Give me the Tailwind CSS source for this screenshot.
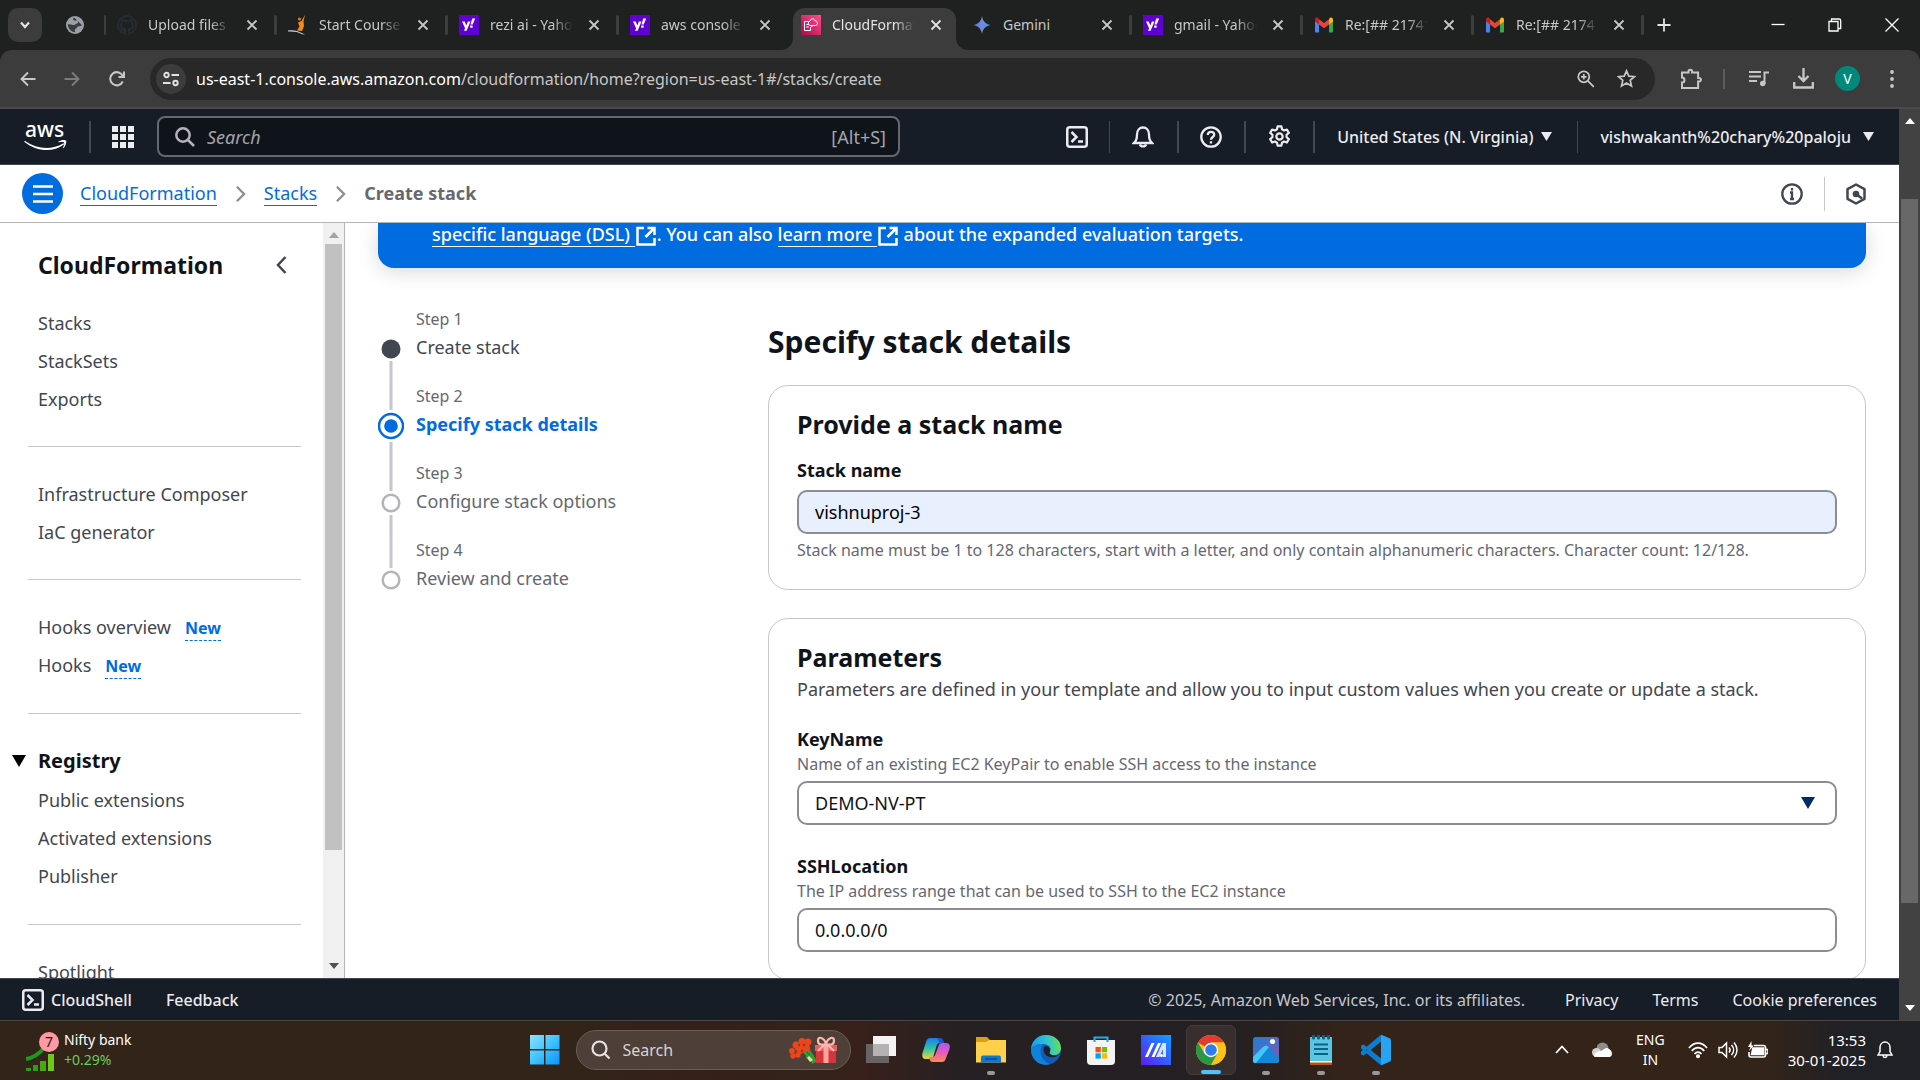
<!DOCTYPE html>
<html lang="en">
<head>
<meta charset="utf-8">
<title>CloudFormation - Create stack</title>
<script src="https://cdn.jsdelivr.net/npm/@tailwindcss/browser@4"></script>
</head>
<body class="h-screen flex flex-col overflow-hidden bg-white font-['Noto_Sans','Open_Sans',sans-serif] text-[#0f141a]">

<!-- Shared symbols -->
<svg class="hidden" aria-hidden="true">
  <symbol id="x" viewBox="0 0 20 20"><path d="M5.500 5.500l9 9M14.500 5.500l-9 9" stroke="currentColor" stroke-width="1.800" fill="none"/></symbol>
  <symbol id="yahoo" viewBox="0 0 20 20"><path fill="#5f01d1" d="M0 0h20v20H0z"/><path fill="#fff" d="M3 6.500h2.700l1.600 3.900 1.600-3.900h2.600L7.600 15.800H5l1.100-2.500zM13.200 3.500h3l-2.500 6h-2.200zM11.200 10.500h2.400v2.200h-2.400z"/></symbol>
  <symbol id="gmail" viewBox="0 0 20 16"><path fill="#4285f4" d="M1 3v11.500c0 .6.500 1 1 1h3V7z"/><path fill="#34a853" d="M15 15.500h3c.6 0 1-.4 1-1V3l-4 4z"/><path fill="#fbbc04" d="M15 2.200V7.500l4-3V2.500c0-1.800-2-2.500-3.200-1.500z"/><path fill="#ea4335" d="M5 7.500V2.200l5 3.800 5-3.800v5.300l-5 3.800z"/><path fill="#c5221f" d="M1 2.500v2l4 3V2.200L4.200 1C3 0 1 .8 1 2.500z"/></symbol>
  <symbol id="shell" viewBox="0 0 22 22"><rect x="1.250" y="1.250" width="19.500" height="19.500" rx="2.500" fill="none" stroke="currentColor" stroke-width="2.500"/><path d="M5.500 6l5 5-5 5M12 15.500h5" fill="none" stroke="currentColor" stroke-width="2.500"/></symbol>
  <symbol id="ext" viewBox="0 0 20 20"><path d="M8 2H1.500v16.500h17V12M11.500 2h7v7M18 2.500L9.500 11" fill="none" stroke="currentColor" stroke-width="2.500"/></symbol>
  <symbol id="caret" viewBox="0 0 12 12"><path d="M0 1h12L6 11z" fill="currentColor"/></symbol>
  <symbol id="crumb" viewBox="0 0 12 20"><path d="M2 2l8 8-8 8" fill="none" stroke="currentColor" stroke-width="2.500"/></symbol>
</svg>

<!-- Tab strip -->
<header class="flex h-[50px] shrink-0 items-stretch bg-[#1f2120] text-sm text-[#c7c7c7]">
  <button aria-label="Search tabs" class="ml-2 mt-2 flex size-[34px] items-center justify-center rounded-[10px] bg-[#3c3c3c]"><svg class="size-4" viewBox="0 0 16 16"><path d="M4 5.500l4 4.500 4-4.500" fill="none" stroke="#e3e3e3" stroke-width="2.200"/></svg></button>
  <button aria-label="Pinned tab" class="flex w-[62px] items-center justify-center pl-1"><svg class="size-[18px]" viewBox="0 0 18 18"><circle cx="9" cy="9" r="9" fill="#9aa0a6"/><path d="M8.500 1.800C5 3 8 5 10.500 4.500c2 0 2 2.500.5 3-2 .5-2 2-4 1.500C5 8.500 3 8 1.800 8.500c.2 4 3.200 7.500 7.200 7.700.5-1-1-2.500.5-3.500 2-.5 1.500-2.700 3.500-2.500 1 0 2-.5 3-1" fill="#3a3d3f"/></svg></button>
  <div class="h-5 w-[2px] self-center rounded bg-[#3c3e3d]"></div>
  <nav class="flex min-w-0" aria-label="Tabs">
    <div class="flex w-[171px] items-center">
      <div class="ml-[3px] mr-[2px] flex min-w-0 flex-1 items-center pl-2 pr-2.5"><svg class="size-5 shrink-0" viewBox="0 0 20 20"><path d="M8 18.500v-3c-3 .5-3-1.500-4-2M8 18.500C3.500 17.500 1 14 1 10a9 9 0 0118 0c0 4-2.500 7.500-7 8.500v-4c2.500-.5 4-2 4-4.500 0-1.500-.8-2.500-1.200-3 0-1 0-1.500-.3-2-1 0-2 1-2.500 1.200-1.500-.3-3-.3-4 0C7.500 6 6.500 5 5.500 5c-.3.500-.3 1-.3 2C4.500 8 4 9 4 10c0 2.500 1.500 4 4 4.500z" fill="none" stroke="#262c34" stroke-width="2"/></svg><a href="#" class="ml-[11px] min-w-0 flex-1 overflow-hidden whitespace-nowrap [mask-image:linear-gradient(to_right,black_75%,transparent)]">Upload files</a><button aria-label="Close tab" class="ml-[11px]"><svg class="size-5"><use href="#x"/></svg></button></div>
      <div class="h-5 w-[3px] rounded bg-[#3c3e3d]"></div>
    </div>
    <div class="flex w-[171px] items-center">
      <div class="ml-[3px] mr-[2px] flex min-w-0 flex-1 items-center pl-2 pr-2.5"><svg class="size-5 shrink-0" viewBox="0 0 20 20"><path d="M17 0l-1.500 6.500L16 11l-2 5-5-.5 2.500-4L10 7.500l3.500-1.500z" fill="#f08c1e"/><circle cx="11.500" cy="4" r="1.600" fill="#e8710a"/><path d="M0 15.500c5-1 10 0 17 4l-3-.2c-4-2.500-8-3-14-2.800z" fill="#c8cbe6"/></svg><a href="#" class="ml-[11px] min-w-0 flex-1 overflow-hidden whitespace-nowrap [mask-image:linear-gradient(to_right,black_75%,transparent)]">Start Course</a><button aria-label="Close tab" class="ml-[11px]"><svg class="size-5"><use href="#x"/></svg></button></div>
      <div class="h-5 w-[3px] rounded bg-[#3c3e3d]"></div>
    </div>
    <div class="flex w-[171px] items-center">
      <div class="ml-[3px] mr-[2px] flex min-w-0 flex-1 items-center pl-2 pr-2.5"><svg class="size-5 shrink-0"><use href="#yahoo"/></svg><a href="#" class="ml-[11px] min-w-0 flex-1 overflow-hidden whitespace-nowrap [mask-image:linear-gradient(to_right,black_75%,transparent)]">rezi ai - Yahoo</a><button aria-label="Close tab" class="ml-[11px]"><svg class="size-5"><use href="#x"/></svg></button></div>
      <div class="h-5 w-[3px] rounded bg-[#3c3e3d]"></div>
    </div>
    <div class="flex w-[171px] items-center">
      <div class="ml-[3px] mr-[2px] flex min-w-0 flex-1 items-center pl-2 pr-2.5"><svg class="size-5 shrink-0"><use href="#yahoo"/></svg><a href="#" class="ml-[11px] min-w-0 flex-1 overflow-hidden whitespace-nowrap [mask-image:linear-gradient(to_right,black_75%,transparent)]">aws console</a><button aria-label="Close tab" class="ml-[11px]"><svg class="size-5"><use href="#x"/></svg></button></div>
      <div class="w-[3px]"></div>
    </div>
    <div class="flex w-[171px] items-end">
      <div class="relative ml-[3px] mr-[2px] flex h-[42px] min-w-0 flex-1 items-center rounded-t-xl bg-[#3c3c3c] pb-2 pl-2 pr-2.5 text-[#e3e3e3]">
        <svg class="absolute -left-3 bottom-0 size-3" viewBox="0 0 12 12"><path d="M12 0v12H0A12 12 0 0012 0z" fill="#3c3c3c"/></svg>
        <svg class="absolute -right-3 bottom-0 size-3" viewBox="0 0 12 12"><path d="M0 0v12h12A12 12 0 010 0z" fill="#3c3c3c"/></svg>
        <svg class="size-5 shrink-0" viewBox="0 0 20 20"><defs><linearGradient id="cf" x1="0" y1="1" x2="1" y2="0"><stop stop-color="#b0084d"/><stop offset="1" stop-color="#ff4f8b"/></linearGradient></defs><path fill="url(#cf)" d="M0 0h20v20H0z"/><path d="M9.500 12.500v3h-6v-9h4M5.300 9.500h2.500M5.300 12h2.500M9.300 10.500a2.300 2.300 0 01-.3-4.500c.7-3 4.500-2.700 5-.3 3 0 3.300 4.800.3 4.800zM9.500 12.500l2.500-2" fill="none" stroke="#fff" stroke-width="1"/></svg>
        <a href="#" aria-current="page" class="ml-[11px] min-w-0 flex-1 overflow-hidden whitespace-nowrap [mask-image:linear-gradient(to_right,black_75%,transparent)]">CloudFormation</a><button aria-label="Close tab" class="ml-[11px]"><svg class="size-5"><use href="#x"/></svg></button></div>
      <div class="w-[3px]"></div>
    </div>
    <div class="flex w-[171px] items-center">
      <div class="ml-[3px] mr-[2px] flex min-w-0 flex-1 items-center pl-2 pr-2.5"><svg class="size-5 shrink-0" viewBox="0 0 20 20"><defs><linearGradient id="gm" x1="0" y1="0" x2="1" y2="0"><stop stop-color="#4a7ff0"/><stop offset=".5" stop-color="#7a86d8"/><stop offset="1" stop-color="#2b9cf0"/></linearGradient></defs><path fill="url(#gm)" d="M10 1c.8 5 3.500 8 8.500 9-5 1-7.700 4-8.500 9-.8-5-3.500-8-8.500-9 5-1 7.700-4 8.500-9z"/></svg><a href="#" class="ml-[11px] min-w-0 flex-1 overflow-hidden whitespace-nowrap">Gemini</a><button aria-label="Close tab" class="ml-[11px]"><svg class="size-5"><use href="#x"/></svg></button></div>
      <div class="h-5 w-[3px] rounded bg-[#3c3e3d]"></div>
    </div>
    <div class="flex w-[171px] items-center">
      <div class="ml-[3px] mr-[2px] flex min-w-0 flex-1 items-center pl-2 pr-2.5"><svg class="size-5 shrink-0"><use href="#yahoo"/></svg><a href="#" class="ml-[11px] min-w-0 flex-1 overflow-hidden whitespace-nowrap [mask-image:linear-gradient(to_right,black_75%,transparent)]">gmail - Yahoo</a><button aria-label="Close tab" class="ml-[11px]"><svg class="size-5"><use href="#x"/></svg></button></div>
      <div class="h-5 w-[3px] rounded bg-[#3c3e3d]"></div>
    </div>
    <div class="flex w-[171px] items-center">
      <div class="ml-[3px] mr-[2px] flex min-w-0 flex-1 items-center pl-2 pr-2.5"><svg class="h-4 w-5 shrink-0"><use href="#gmail"/></svg><a href="#" class="ml-[11px] min-w-0 flex-1 overflow-hidden whitespace-nowrap [mask-image:linear-gradient(to_right,black_75%,transparent)]">Re:[## 21741</a><button aria-label="Close tab" class="ml-[11px]"><svg class="size-5"><use href="#x"/></svg></button></div>
      <div class="h-5 w-[3px] rounded bg-[#3c3e3d]"></div>
    </div>
    <div class="flex w-[170px] items-center">
      <div class="ml-[3px] mr-[2px] flex min-w-0 flex-1 items-center pl-2 pr-2.5"><svg class="h-4 w-5 shrink-0"><use href="#gmail"/></svg><a href="#" class="ml-[11px] min-w-0 flex-1 overflow-hidden whitespace-nowrap [mask-image:linear-gradient(to_right,black_75%,transparent)]">Re:[## 21741</a><button aria-label="Close tab" class="ml-[11px]"><svg class="size-5"><use href="#x"/></svg></button></div>
      <div class="h-5 w-[3px] rounded bg-[#3c3e3d]"></div>
    </div>
  </nav>
  <button aria-label="New tab" class="flex w-10 items-center justify-center"><svg class="size-4" viewBox="0 0 16 16"><path d="M8 1.500v13M1.500 8h13" stroke="#e3e3e3" stroke-width="1.800"/></svg></button>
  <div class="ml-auto flex text-white">
    <button aria-label="Minimize" class="flex w-[57px] items-center justify-center"><svg class="size-4" viewBox="0 0 16 16"><path d="M1.500 7.500h13" stroke="currentColor" stroke-width="1.300"/></svg></button>
    <button aria-label="Restore" class="flex w-[57px] items-center justify-center"><svg class="size-4" viewBox="0 0 16 16"><path d="M2 4.500h9v9.500H2zM4.500 4V2h7.500c1 0 1.700.7 1.700 1.700V11.500H11.500" fill="none" stroke="currentColor" stroke-width="1.300"/></svg></button>
    <button aria-label="Close" class="flex w-[57px] items-center justify-center"><svg class="size-4" viewBox="0 0 16 16"><path d="M1.500 1.500l13 13M14.500 1.500l-13 13" stroke="currentColor" stroke-width="1.300"/></svg></button>
  </div>
</header>

<!-- Address bar -->
<div class="shrink-0 bg-[#1f2120]">
<div class="flex h-[59px] items-center rounded-t-xl border-b-2 border-[#4a4a4a] bg-[#3c3c3c] text-[#c7c7c7]">
  <button aria-label="Back" class="ml-4 flex size-6 items-center justify-center"><svg class="size-4" viewBox="0 0 16 16"><path d="M15.500 8H1.500M8 1.500L1.500 8 8 14.500" fill="none" stroke="currentColor" stroke-width="1.900"/></svg></button>
  <button aria-label="Forward" class="ml-5 flex size-6 items-center justify-center text-[#7c7c7c]"><svg class="size-4" viewBox="0 0 16 16"><path d="M.5 8h14M8 1.500L14.500 8 8 14.500" fill="none" stroke="currentColor" stroke-width="1.900"/></svg></button>
  <button aria-label="Reload" class="ml-[21px] flex size-6 items-center justify-center"><svg class="size-4" viewBox="0 0 16 16"><path d="M13.800 10.500A6.600 6.600 0 1114 5.500M15 .5v5.500H9.500" fill="none" stroke="currentColor" stroke-width="2"/></svg></button>
  <div class="ml-[21px] flex h-[42px] min-w-0 flex-1 items-center rounded-full bg-[#282828]">
    <button aria-label="Site information" class="ml-1.5 flex size-[30px] shrink-0 items-center justify-center rounded-full bg-[#3c3c3c]"><svg class="size-4" viewBox="0 0 16 16" fill="none" stroke="#e3e3e3" stroke-width="1.900"><circle cx="3.500" cy="4" r="2.200"/><path d="M8.500 4H16M0 12h7.500"/><circle cx="12.500" cy="12" r="2.200"/></svg></button>
    <div class="ml-2.5 min-w-0 flex-1 truncate text-base"><span class="text-white">us-east-1.console.aws.amazon.com</span>/cloudformation/home?region=us-east-1#/stacks/create</div>
    <button aria-label="Zoom" class="flex size-5 items-center justify-center"><svg class="size-[18px]" viewBox="0 0 18 18" fill="none" stroke="currentColor" stroke-width="1.800"><circle cx="6.800" cy="6.800" r="5.500"/><path d="M10.800 10.800l6 6M6.800 4v5.600M4 6.800h5.600"/></svg></button>
    <button aria-label="Bookmark" class="ml-5 mr-[19px] flex size-5 items-center justify-center"><svg class="size-[19px]" viewBox="0 0 19 19"><path d="M9.500 1.800l2.300 5.300 5.700.5-4.300 3.800 1.300 5.600-5-3-5 3 1.300-5.600L1.500 7.600l5.700-.5z" fill="none" stroke="currentColor" stroke-width="1.700"/></svg></button>
  </div>
  <button aria-label="Extensions" class="ml-6 flex size-6 items-center justify-center"><svg class="size-[22px]" viewBox="0 0 22 22"><path d="M2 4.500h6.500v-1a1.800 1.800 0 013.600 0v1h6v5.500h1a1.800 1.800 0 010 3.600h-1V20H2v-5.500a2.500 2.500 0 000-5z" fill="none" stroke="currentColor" stroke-width="2"/></svg></button>
  <div class="ml-5 h-5 w-0.5 bg-[#5c5c5c]"></div>
  <button aria-label="Media controls" class="ml-[22px] flex size-6 items-center justify-center"><svg class="size-5" viewBox="0 0 20 20"><path d="M0 3h12M0 7.500h12M0 12h8M15.500 15V3.500H20" fill="none" stroke="currentColor" stroke-width="2"/><circle cx="13.700" cy="14.500" r="2.700" fill="currentColor"/></svg></button>
  <button aria-label="Downloads" class="ml-5 flex size-6 items-center justify-center"><svg class="size-[21px]" viewBox="0 0 21 21"><path d="M10.500 0v12M5.500 8l5 5 5-5M1.200 14v5.500h18.600V14" fill="none" stroke="currentColor" stroke-width="2.300"/></svg></button>
  <button aria-label="Profile" class="ml-5 flex size-[25px] items-center justify-center rounded-full bg-[#00897b] text-sm text-white">V</button>
  <button aria-label="Menu" class="ml-[30px] mr-[26px]"><svg class="h-5 w-1" viewBox="0 0 4 20" fill="currentColor"><circle cx="2" cy="3" r="1.900"/><circle cx="2" cy="10" r="1.900"/><circle cx="2" cy="17" r="1.900"/></svg></button>
</div>
</div>

<!-- Web page and its scrollbar -->
<div class="flex min-h-0 flex-1">
  <div class="flex min-w-0 flex-1 flex-col">

    <header class="flex h-14 shrink-0 items-center border-b border-[#424650] bg-[#161d26] text-base text-[#ebebf0]">
      <a href="#" aria-label="AWS home" class="ml-6"><svg class="h-8 w-[44px]" viewBox="0 0 44 32"><text x="1" y="16" font-family="Noto Sans" font-weight="500" font-size="21" fill="#fff">aws</text><path d="M1 20c12 8.500 27 9 38 2.500.8-.4 1.500.4.8 1C29 32 12 30.500.5 21c-.5-.5 0-1.300.5-1z" fill="#fff"/><path d="M34.500 20.500c2-1.500 6.500-2 7.500-1 .8 1-.2 5.500-2.500 7.500-.5.400-.8.200-.6-.3.800-1.600 1.700-4.200 1.200-5-.6-.8-3.500-.6-5.200-.4-.6 0-.8-.3-.4-.8z" fill="#fff"/></svg></a>
      <div class="ml-[21px] h-8 w-0.5 bg-[#424650]"></div>
      <button aria-label="Services" class="ml-[21px]"><svg class="size-[22px]" viewBox="0 0 22 22" fill="currentColor"><path d="M0 0h6v6H0zM8 0h6v6H8zM16 0h6v6h-6zM0 8h6v6H0zM8 8h6v6H8zM16 8h6v6h-6zM0 16h6v6H0zM8 16h6v6H8zM16 16h6v6h-6z"/></svg></button>
      <label class="ml-[23px] flex h-[41px] w-[743px] items-center rounded-lg border-2 border-[#656871] bg-[#0f141a] px-4">
        <svg class="size-5 shrink-0" viewBox="0 0 20 20" fill="none" stroke="#b4b4bb" stroke-width="2.500"><circle cx="8" cy="8" r="6.700"/><path d="M13 13l6 6"/></svg>
        <input type="search" placeholder="Search" class="ml-3 min-w-0 flex-1 bg-transparent text-lg outline-none placeholder:italic placeholder:text-[#a4a4ad]">
        <span class="-mr-1 text-lg text-[#a4a4ad]">[Alt+S]</span>
      </label>
      <div class="ml-auto flex items-center">
        <button aria-label="CloudShell"><svg class="size-[22px]"><use href="#shell"/></svg></button>
        <div class="ml-[21px] h-8 w-px bg-[#424650]"></div>
        <button aria-label="Notifications" class="ml-[22px]"><svg class="size-[22px]" viewBox="0 0 22 22" fill="none" stroke="currentColor" stroke-width="2.300"><path d="M2 17c2.500-2 3-4 3-8.500C5 4.500 7.500 1.500 11 1.500s6 3 6 7c0 4.500.5 6.500 3 8.500zM8 18.500c.5 2.500 5.500 2.500 6 0"/></svg></button>
        <div class="ml-[23px] h-8 w-0.5 bg-[#424650]"></div>
        <button aria-label="Help" class="ml-[21px]"><svg class="size-[22px]" viewBox="0 0 22 22" fill="none" stroke="currentColor" stroke-width="2.300"><circle cx="11" cy="11" r="9.700"/><path d="M7.800 9c0-4.200 6.400-4.200 6.400-.3 0 2.300-3.200 2.300-3.200 5M11 15.200v2.300"/></svg></button>
        <div class="ml-[22px] h-8 w-0.5 bg-[#424650]"></div>
        <button aria-label="Settings" class="ml-[22px]"><svg class="size-[23px]" viewBox="0 0 24 24" fill="none" stroke="currentColor" stroke-width="2.300"><circle cx="12" cy="12" r="3.300"/><path d="M10 1.500h4l.6 3 2.200 1.200 2.900-1 2 3.500-2.300 2v2.600l2.300 2-2 3.500-2.900-1-2.200 1.200-.6 3h-4l-.6-3-2.200-1.200-2.900 1-2-3.500 2.300-2v-2.600l-2.300-2 2-3.500 2.900 1 2.200-1.200z" stroke-linejoin="round"/></svg></button>
        <div class="ml-[22px] h-8 w-0.5 bg-[#424650]"></div>
        <button class="ml-[22px] flex items-center gap-2 font-medium">United States (N. Virginia)<svg class="size-[11px]"><use href="#caret"/></svg></button>
        <div class="ml-[25px] h-8 w-px bg-[#424650]"></div>
        <button class="ml-[22px] mr-[25px] flex items-center gap-3 font-medium">vishwakanth%20chary%20paloju<svg class="size-[11px]"><use href="#caret"/></svg></button>
      </div>
    </header>

    <div class="flex h-[58px] shrink-0 items-center border-b border-[#b4b4bb] bg-white text-lg">
      <button aria-label="Toggle navigation" class="ml-[22px] flex size-[41px] items-center justify-center rounded-full bg-[#006ce0]"><svg class="h-[18px] w-5" viewBox="0 0 20 18"><path d="M0 1.500h20M0 9h20M0 16.500h20" stroke="#fff" stroke-width="2.500"/></svg></button>
      <nav aria-label="Breadcrumbs" class="ml-[17px] flex items-center">
        <a href="#" class="border-b border-[#006ce0] leading-6 text-[#006ce0]">CloudFormation</a>
        <svg class="mx-[18px] h-[18px] w-[11px] text-[#8c8c94]"><use href="#crumb"/></svg>
        <a href="#" class="border-b border-[#006ce0] leading-6 text-[#006ce0]">Stacks</a>
        <svg class="mx-[18px] h-[18px] w-[11px] text-[#8c8c94]"><use href="#crumb"/></svg>
        <span class="border-b border-transparent font-bold leading-6 text-[#656871]">Create stack</span>
      </nav>
      <button aria-label="Info" class="ml-auto text-[#424650]"><svg class="size-[22px]" viewBox="0 0 22 22"><circle cx="11" cy="11" r="9.700" fill="none" stroke="currentColor" stroke-width="2.300"/><path d="M11 5v2.500M9 9.500h2V16M9 16h4" fill="none" stroke="currentColor" stroke-width="2.300"/></svg></button>
      <div class="ml-[21px] h-[34px] w-px bg-[#c6c6cd]"></div>
      <button aria-label="Preferences" class="ml-5 mr-8 text-[#424650]"><svg class="size-[22px]" viewBox="0 0 22 22"><path d="M11 1.500l8.500 4.700v9.600L11 20.500l-8.500-4.700V6.200z" fill="none" stroke="currentColor" stroke-width="2.500" stroke-linejoin="round"/><circle cx="11" cy="11" r="3.300" fill="currentColor"/><path d="M11 11l6 4.500" stroke="currentColor" stroke-width="2.500"/></svg></button>
    </div>

    <div class="flex min-h-0 flex-1">
      <!-- Side navigation -->
      <aside class="flex w-[345px] shrink-0 border-r border-[#b4b4bb]">
        <nav aria-label="CloudFormation" class="min-w-0 flex-1 overflow-hidden pl-7 pr-[22px] text-lg text-[#424650]">
          <div class="flex items-center justify-between pl-2.5 pt-6 pr-3.5">
            <h2 class="text-[23px] font-bold leading-9 text-[#0f141a]">CloudFormation</h2>
            <button aria-label="Close navigation"><svg class="h-[18px] w-[11px]" viewBox="0 0 11 18"><path d="M9.500 1L2 9l7.500 8" fill="none" stroke="#424650" stroke-width="2.500"/></svg></button>
          </div>
          <ul class="mt-[21px] pl-2.5 leading-[38px]">
            <li><a href="#">Stacks</a></li><li><a href="#">StackSets</a></li><li><a href="#">Exports</a></li>
          </ul>
          <hr class="mb-7 mt-[28px] border-[#c6c6cd]">
          <ul class="pl-2.5 leading-[38px]">
            <li><a href="#">Infrastructure Composer</a></li><li><a href="#">IaC generator</a></li>
          </ul>
          <hr class="mb-7 mt-[28px] border-[#c6c6cd]">
          <ul class="pl-2.5">
            <li class="flex h-[38px] items-center gap-3.5"><a href="#">Hooks overview</a><button class="mt-0.5 border-b border-dashed border-[#006ce0] text-base font-bold text-[#006ce0]">New</button></li>
            <li class="flex h-[38px] items-center gap-3.5"><a href="#">Hooks</a><button class="mt-0.5 border-b border-dashed border-[#006ce0] text-base font-bold text-[#006ce0]">New</button></li>
          </ul>
          <hr class="mb-7 mt-[29px] border-[#c6c6cd]">
          <button aria-expanded="true" class="-ml-4 flex h-[38px] items-center gap-3 text-xl font-bold text-[#0f141a]"><svg class="h-3 w-3.5" preserveAspectRatio="none" viewBox="0 0 14 12"><path d="M0 0h14L7 12z"/></svg>Registry</button>
          <ul class="pl-2.5 pt-px leading-[38px]">
            <li><a href="#">Public extensions</a></li><li><a href="#">Activated extensions</a></li><li><a href="#">Publisher</a></li>
          </ul>
          <hr class="mb-7 mt-[29px] border-[#c6c6cd]">
          <ul class="pl-2.5 leading-[38px]"><li><a href="#">Spotlight</a></li></ul>
        </nav>
        <div class="flex w-[21px] flex-col items-center justify-between bg-[#f0f0f0]" aria-hidden="true">
          <svg class="mt-[9px] h-1.5 w-2.5 shrink-0" viewBox="0 0 10 6"><path d="M0 6h10L5 0z" fill="#a3a3a3"/></svg>
          <div class="my-1.5 w-[17px] flex-1"><div class="h-[85%] bg-[#c1c1c1]"></div></div>
          <svg class="mb-[9px] h-1.5 w-2.5 shrink-0" viewBox="0 0 10 6"><path d="M0 0h10L5 6z" fill="#505050"/></svg>
        </div>
      </aside>

      <main class="min-w-0 flex-1 overflow-hidden px-[33px]">
        <p class="rounded-b-2xl bg-[#006ce0] pb-[22px] pl-[54px] text-lg font-medium leading-[23px] text-white shadow-[0_4px_20px_rgba(0,7,22,0.15)]"><a href="#" class="border-b border-white">specific language (DSL) </a><svg class="mx-px inline size-5"><use href="#ext"/></svg>. You can also <a href="#" class="border-b border-white">learn more </a><svg class="mx-px inline size-5"><use href="#ext"/></svg> about the expanded evaluation targets.</p>

        <div class="flex">
          <ol class="w-[390px] shrink-0 pt-9" aria-label="Steps">
            <li class="flex h-[77px] gap-3">
              <svg class="h-[77px] w-[26px] shrink-0" viewBox="0 0 26 77"><circle cx="13" cy="45" r="9.500" fill="#424650"/><path d="M13 57v20" stroke="#c6c6cd" stroke-width="3"/></svg>
              <div><p class="text-base leading-[30px] text-[#656871]">Step 1</p><a href="#" class="block text-lg leading-[26px] text-[#424650]">Create stack</a></div>
            </li>
            <li class="flex h-[77px] gap-3">
              <svg class="h-[77px] w-[26px] shrink-0" viewBox="0 0 26 77"><circle cx="13" cy="45" r="12" fill="#fff" stroke="#006ce0" stroke-width="2.500"/><circle cx="13" cy="45" r="6.800" fill="#006ce0"/><path d="M13 0v29M13 61v16" stroke="#c6c6cd" stroke-width="3"/></svg>
              <div><p class="text-base leading-[30px] text-[#656871]">Step 2</p><a href="#" aria-current="step" class="block text-lg font-bold leading-[26px] text-[#006ce0]">Specify stack details</a></div>
            </li>
            <li class="flex h-[77px] gap-3">
              <svg class="h-[77px] w-[26px] shrink-0" viewBox="0 0 26 77"><circle cx="13" cy="45" r="8.300" fill="#fff" stroke="#b4b4bb" stroke-width="2.500"/><path d="M13 0v33M13 57v20" stroke="#c6c6cd" stroke-width="3"/></svg>
              <div><p class="text-base leading-[30px] text-[#656871]">Step 3</p><p class="text-lg leading-[26px] text-[#656871]">Configure stack options</p></div>
            </li>
            <li class="flex h-[77px] gap-3">
              <svg class="h-[77px] w-[26px] shrink-0" viewBox="0 0 26 77"><circle cx="13" cy="45" r="8.300" fill="#fff" stroke="#b4b4bb" stroke-width="2.500"/><path d="M13 0v33" stroke="#c6c6cd" stroke-width="3"/></svg>
              <div><p class="text-base leading-[30px] text-[#656871]">Step 4</p><p class="text-lg leading-[26px] text-[#656871]">Review and create</p></div>
            </li>
          </ol>

          <form class="min-w-0 flex-1 pt-[50px]">
            <h1 class="text-[30px] font-bold leading-[48px]">Specify stack details</h1>
            <section class="mt-[19px] rounded-[20px] border border-[#c6c6cd] px-7 pb-[27px] pt-5">
              <h2 class="text-[25px] font-bold leading-9">Provide a stack name</h2>
              <label for="name" class="mt-3.5 block text-lg font-bold leading-7">Stack name</label>
              <input id="name" value="vishnuproj-3" class="mt-1.5 block h-11 w-full rounded-[10px] border-2 border-[#8c8c94] bg-[#e8effd] px-4 text-lg text-black">
              <p class="mt-1 text-base text-[#656871]">Stack name must be 1 to 128 characters, start with a letter, and only contain alphanumeric characters. Character count: 12/128.</p>
            </section>
            <section class="mt-7 rounded-[20px] border border-[#c6c6cd] px-7 pb-[27px] pt-5">
              <h2 class="text-[25px] font-bold leading-9">Parameters</h2>
              <p class="text-lg leading-7 text-[#424650]">Parameters are defined in your template and allow you to input custom values when you create or update a stack.</p>
              <label for="key" class="mt-[22px] block text-lg font-bold leading-7">KeyName</label>
              <p class="text-base leading-[22px] text-[#656871]">Name of an existing EC2 KeyPair to enable SSH access to the instance</p>
              <div class="relative mt-1.5">
                <select id="key" class="block h-11 w-full appearance-none rounded-[10px] border-2 border-[#8c8c94] bg-white px-4 text-lg"><option>DEMO-NV-PT</option></select>
                <svg class="pointer-events-none absolute right-[22px] top-4 h-3 w-3.5" preserveAspectRatio="none" viewBox="0 0 14 12"><path d="M0 0h14L7 12z" fill="#002b66"/></svg>
              </div>
              <label for="ssh" class="mt-[27px] block text-lg font-bold leading-7">SSHLocation</label>
              <p class="text-base leading-[22px] text-[#656871]">The IP address range that can be used to SSH to the EC2 instance</p>
              <input id="ssh" value="0.0.0.0/0" class="mt-1.5 block h-11 w-full rounded-[10px] border-2 border-[#8c8c94] bg-white px-4 text-lg">
            </section>
          </form>
        </div>
      </main>
    </div>

    <footer class="flex h-[42px] shrink-0 items-center border-t border-[#424650] bg-[#161d26] text-base text-[#ebebf0]">
      <button class="ml-[22px] flex items-center gap-[7px] font-medium"><svg class="size-[22px]"><use href="#shell"/></svg>CloudShell</button>
      <a href="#" class="ml-[34px] font-medium">Feedback</a>
      <span class="ml-auto text-[#c6c6cd]">© 2025, Amazon Web Services, Inc. or its affiliates.</span>
      <a href="#" class="ml-10">Privacy</a>
      <a href="#" class="ml-[34px]">Terms</a>
      <a href="#" class="ml-[34px] mr-[22px]">Cookie preferences</a>
    </footer>
  </div>

  <div class="flex w-[21px] shrink-0 flex-col items-center bg-[#424242]" aria-hidden="true">
    <svg class="mt-[9px] h-1.5 w-2.5 shrink-0" viewBox="0 0 10 6"><path d="M0 6h10L5 0z" fill="#fff"/></svg>
    <div class="my-1.5 w-[17px] flex-1 pt-[69px]"><div class="h-[88%] bg-[#686868]"></div></div>
    <svg class="mb-[9px] h-1.5 w-2.5 shrink-0" viewBox="0 0 10 6"><path d="M0 0h10L5 6z" fill="#fff"/></svg>
  </div>
</div>

<!-- Taskbar -->
<footer class="grid h-[60px] shrink-0 grid-cols-[1fr_auto_1fr] items-center border-t border-[#4d4642] bg-[linear-gradient(to_right,#33241a_0%,#322419_30%,#35201a_36%,#332319_42%,#38201b_45%,#262023_50%,#231f22_64%,#33231a_70%,#332419_92%,#202027_96%)] pb-0.5 text-sm text-white">
  <button class="flex items-center pl-[26px] text-left">
    <svg class="h-[46px] w-9" viewBox="0 0 36 46"><path d="M0 32c7-1 12-4 18-11" fill="none" stroke="#1d9a1d" stroke-width="4"/><path d="M0 41h5v3H0zM7 38h5v6H7z" fill="#2a9b1a"/><path d="M14 34h6v10h-6z" fill="#45a814"/><path d="M22 27h6v17h-6z" fill="#6ec71a"/><circle cx="23" cy="15" r="10" fill="#ff99a4"/><text x="23" y="20" text-anchor="middle" font-family="Noto Sans" font-size="14" fill="#1a1a1a">7</text></svg>
    <span class="ml-0.5 leading-5">Nifty bank<br><span class="text-[#6ccb5f]">+0.29%</span></span>
  </button>
  <div class="flex items-center">
    <button aria-label="Start" class="ml-2.5 mr-4"><svg class="size-[30px]" viewBox="0 0 30 30"><defs><linearGradient id="win" gradientUnits="userSpaceOnUse" x1="0" y1="0" x2="30" y2="30"><stop stop-color="#8fe0ff"/><stop offset=".5" stop-color="#3cc4ff"/><stop offset="1" stop-color="#0a8fff"/></linearGradient></defs><path fill="url(#win)" d="M0 0h14v14H0zM15.500 0h14v14h-14zM0 15.500h14v14H0zM15.500 15.500h14v14h-14z"/></svg></button>
    <label class="mr-[5px] flex h-10 w-[275px] items-center rounded-full border border-[#6a5d56] bg-[#4e4038] pl-3.5 pr-3">
      <svg class="size-5" viewBox="0 0 20 20" fill="none" stroke="#e3e3e3" stroke-width="2.200"><circle cx="8.500" cy="8.500" r="7"/><path d="M13.500 13.500l5 5"/></svg>
      <input placeholder="Search" aria-label="Search" class="ml-3 min-w-0 flex-1 bg-transparent text-base outline-none placeholder:text-[#d8d4d2]">
      <svg class="h-7 w-[50px]" viewBox="0 0 50 28"><path d="M15 14l11 13M19 12l9 14M18 21h8" stroke="#2f9e2f" stroke-width="3"/><g fill="#e8461e"><circle cx="8" cy="9" r="3.500"/><circle cx="14" cy="5.500" r="3.500"/><circle cx="20" cy="6" r="3.500"/><circle cx="12" cy="13" r="5"/><circle cx="4" cy="15" r="3"/><circle cx="5" cy="20" r="2.700"/><circle cx="18" cy="12" r="4"/><circle cx="10" cy="19" r="2.700"/></g><g fill="#b32a10"><circle cx="11" cy="9" r="1.200"/><circle cx="16" cy="9" r="1.200"/><circle cx="8" cy="15" r="1.200"/><circle cx="14" cy="15" r="1.200"/></g><path d="M21 20l4 4-3 2-3-4z" fill="#f3d7a0"/><path d="M28 12h20v15H28z" fill="#d8343c"/><path d="M27 9h22v6H27z" fill="#ee5a5e"/><path d="M35.500 9h5v18h-5z" fill="#ffa6a0"/><path d="M38 8c-2-7-8-8-8-3.500S33 9 38 8c5 1 8 1 8-3.500S40 1 38 8zM37 8l-7 7M39 8l7 7" fill="none" stroke="#ffb8b0" stroke-width="2.200"/></svg>
    </label>
    <button aria-label="Task view" class="relative flex size-[50px] items-center justify-center"><svg class="size-[30px]" viewBox="0 0 30 30"><path d="M0 9h23v19H0z" fill="#686463"/><path d="M7 1h23v20H7z" fill="#f3f3f3"/><path d="M7 9h16v12H7z" fill="#b5b3b2"/></svg></button>
    <button aria-label="Copilot" class="relative ml-[5px] flex size-[50px] items-center justify-center"><svg class="size-[30px]" viewBox="0 0 30 30"><defs><linearGradient id="cpa" x1="0" y1="0" x2="0" y2="1"><stop stop-color="#1a7cf0"/><stop offset=".5" stop-color="#2cc4a8"/><stop offset="1" stop-color="#f5d33c"/></linearGradient><linearGradient id="cpb" x1="0" y1="0" x2="0" y2="1"><stop stop-color="#a05cf5"/><stop offset=".5" stop-color="#e85ac0"/><stop offset="1" stop-color="#ff8a4c"/></linearGradient></defs><path d="M9 3h9c2 0 3 1 3.500 3l.5 2h-3c-2 0-3 1-3.500 3l-3 10c-.6 2-1.500 3-3.500 3H5c-3 0-4.500-2-3.500-6L5 7c1-3 2-4 4-4z" fill="url(#cpa)"/><path d="M16 3h3c2 0 3 1 3.500 3l1 3h-4z" fill="#2450c8"/><path d="M21 27h-9c-2 0-3-1-3.500-3L8 22h3c2 0 3-1 3.500-3l3-8c.6-2 1.500-3 3.500-3h4c3 0 4.500 2 3.500 6L25 23c-1 3-2 4-4 4z" fill="url(#cpb)"/></svg></button>
    <button aria-label="File Explorer" class="relative ml-[5px] flex size-[50px] items-center justify-center"><svg class="size-[30px]" viewBox="0 0 30 30"><path d="M0 2h11l3 3h14v6H0z" fill="#e0a00c"/><path d="M0 7h10l3-2h17v22.500H0z" fill="#ffd04c"/><path d="M5 27.500v-5q0-2 2-2h16q2 0 2 2v5z" fill="#0f77cf"/><path d="M9 24h12" stroke="#0a4d92" stroke-width="1.500"/></svg><span class="absolute bottom-0 h-1 w-2 rounded-full bg-[#9c9896]"></span></button>
    <button aria-label="Edge" class="relative ml-[5px] flex size-[50px] items-center justify-center"><svg class="size-[30px]" viewBox="0 0 30 30"><defs><linearGradient id="ed" x1="0" y1=".3" x2="1" y2=".2"><stop stop-color="#1c9cea"/><stop offset=".5" stop-color="#2cc3d8"/><stop offset="1" stop-color="#6be04c"/></linearGradient></defs><circle cx="15" cy="15" r="15" fill="#0f5bb5"/><path d="M0 15C0 6 7 0 15 0c9 0 15 6 15 13 0 5-4 8-9 7-3-.5-3-2-2-3 2-4-1-8-7-8-6 0-12 3-12 6z" fill="url(#ed)"/><path d="M0 14c2-4 8-6 12-4-4 3-4 15 7 19C8 32 0 24 0 14z" fill="#0f83dc"/><path d="M13 12c2-2 6 0 6 3 0 2-1 3 0 4 3 2 7 2 10 0-3 4-14 5-16-2-.5-2-.5-4 0-5z" fill="#231f21"/></svg></button>
    <button aria-label="Microsoft Store" class="relative ml-[5px] flex size-[50px] items-center justify-center"><svg class="size-[30px]" viewBox="0 0 30 30"><path d="M1 5h28v21q0 4-4 4H5q-4 0-4-4z" fill="#f3f3f3"/><path d="M8.500 7V2.500h13V7" fill="none" stroke="#24a8ee" stroke-width="2.200"/><path d="M9.500 12h5.300v5.300H9.500z" fill="#f25022"/><path d="M15.800 12h5.300v5.300h-5.300z" fill="#7fba00"/><path d="M9.500 18.300h5.300v5.300H9.500z" fill="#00a4ef"/><path d="M15.800 18.300h5.300v5.300h-5.300z" fill="#ffb900"/></svg></button>
    <button aria-label="MyASUS" class="relative ml-[5px] flex size-[50px] items-center justify-center"><svg class="size-[30px]" viewBox="0 0 30 30"><defs><linearGradient id="as" x1="0" y1="1" x2="1" y2="0"><stop stop-color="#5a1cf5"/><stop offset="1" stop-color="#10a0ff"/></linearGradient></defs><path d="M0 0h30v30H0z" fill="url(#as)"/><path d="M4 22L10.500 8h3L7 22zM10.500 22L17 8h3l-6.500 14z" fill="#fff"/><path d="M15 22l6.500-14H25v14h-3v-8l-3.500 8z" fill="#d8e4ff"/><circle cx="20.500" cy="20.500" r="1.500" fill="#fff"/></svg></button>
    <button aria-label="Chrome" class="relative ml-[5px] flex size-[50px] items-center justify-center rounded-md border border-[#443a39] bg-[#382e2d]"><svg class="size-[30px]" viewBox="0 0 30 30"><circle cx="15" cy="15" r="15" fill="#fbc116"/><path d="M15 15L2 7.500A15 15 0 0128 7.500H15z" fill="#e33b2e"/><path d="M2 7.500A15 15 0 0015 30l6.500-11.200-13-.1z" fill="#279847"/><path d="M28 7.500H15v7.500l6.500 3.800L15 30A15 15 0 0028 7.500z" fill="#fbc116"/><circle cx="15" cy="15" r="7.200" fill="#fff"/><circle cx="15" cy="15" r="5.800" fill="#2f7cf0"/></svg><span class="absolute bottom-0 h-1 w-5 rounded-full bg-[#4cc2ff]"></span></button>
    <button aria-label="Photos" class="relative ml-[5px] flex size-[50px] items-center justify-center"><svg class="size-[26px]" viewBox="0 0 26 26"><defs><linearGradient id="ph" x1="0" y1="0" x2="1" y2="1"><stop stop-color="#1b7fd4"/><stop offset="1" stop-color="#8a56b0"/></linearGradient><clipPath id="phc"><rect width="26" height="26" rx="2.500"/></clipPath></defs><g clip-path="url(#phc)"><path d="M0 0h26v26H0z" fill="url(#ph)"/><path d="M0 26V22l11-11q2.500-2.500 5 0l10 10v5z" fill="#1586d8"/><path d="M0 26v-6l10-10q3-3 6 0L3 26z" fill="#3fc8f8"/></g><circle cx="19.500" cy="4.500" r="2.600" fill="#fff"/></svg><span class="absolute bottom-0 h-1 w-2 rounded-full bg-[#9c9896]"></span></button>
    <button aria-label="Notepad" class="relative ml-[5px] flex size-[50px] items-center justify-center"><svg class="h-[30px] w-[22px]" viewBox="0 0 22 30"><path d="M0 2h22v25H0z" fill="#5cc5e2"/><path d="M0 26h22v2H0z" fill="#fff"/><path d="M0 27.500h22V30H0z" fill="#b5540c"/><path d="M4 9.500h14M4 14h14M4 19h14" stroke="#0b6187" stroke-width="2"/><path d="M3.500 0v3M8.500 0v3M13.500 0v3M18.500 0v3" stroke="#0b6187" stroke-width="3" stroke-linecap="round"/></svg><span class="absolute bottom-0 h-1 w-2 rounded-full bg-[#9c9896]"></span></button>
    <button aria-label="Visual Studio Code" class="relative ml-[5px] flex size-[50px] items-center justify-center"><svg class="size-[30px]" viewBox="0 0 30 30"><path d="M2.500 10.500L21 25.500l-.5 4L1 13q-1-1 0-2zM2.500 19.500L21 4.500l-.5-4L1 17q-1 1 0 2z" fill="#0a7fd0" stroke="#0a7fd0" stroke-width="2"/><path d="M21 0l8 3.500q1 .5 1 2v19q0 1.500-1 2L21 30q-1 0-1-1V1q0-1 1-1z" fill="#27a5f3"/></svg><span class="absolute bottom-0 h-1 w-2 rounded-full bg-[#9c9896]"></span></button>
  </div>
  <div class="flex items-center justify-end">
    <button aria-label="Hidden icons"><svg class="size-3.5" viewBox="0 0 14 14"><path d="M1 10l6-6.500L13 10" fill="none" stroke="currentColor" stroke-width="1.800"/></svg></button>
    <button aria-label="OneDrive" class="ml-[23px]"><svg class="h-4 w-5" viewBox="0 0 20 16"><circle cx="10.500" cy="6.500" r="6" fill="#8f8c8b"/><circle cx="4.500" cy="10.500" r="4.500" fill="#d5d3d2"/><path d="M2 14c0-3 4-5 7-5l5-3c3 0 6 2.500 6 5.500S18 15 16 15H4q-2 0-2-1z" fill="#fff"/></svg></button>
    <button class="ml-6 leading-5">ENG<br>IN</button>
    <button aria-label="Network, sound and battery" class="ml-[23px] flex items-center gap-2.5">
      <svg class="h-[18px] w-5" viewBox="0 0 20 18" fill="none" stroke="currentColor" stroke-width="1.700"><path d="M1 7c5-6.500 13-6.500 18 0M3.800 10c3.500-4.500 9-4.500 12.400 0M6.500 13c2-2.500 5-2.500 7 0"/><circle cx="10" cy="15.300" r="1.200" fill="currentColor"/></svg>
      <svg class="h-[18px] w-5" viewBox="0 0 20 18" fill="none" stroke="currentColor" stroke-width="1.500"><path d="M1 6.500h3L8.500 2v14L4 11.500H1zM11 6.500c1.300 1.500 1.300 3.500 0 5M13.500 4c2.800 3 2.800 7 0 10M16 1.500c4 4.500 4 10.500 0 15"/></svg>
      <svg class="h-[18px] w-5" viewBox="0 0 20 18" fill="none" stroke="currentColor" stroke-width="1.600"><path d="M6 4.500h9.500q2 0 2 2v7.500q0 2-2 2H3q-2 0-2-2v-3M18 8.500h2v4h-2"/><path d="M5 7h10.500v6.500H3.500z" fill="currentColor"/><path d="M3.500 0L0 6h2.500L1 10l5-5.500H3.500z" fill="currentColor" stroke="none"/></svg>
    </button>
    <button class="ml-5 text-right text-[15px] leading-5">13:53<br>30-01-2025</button>
    <button aria-label="Notifications" class="ml-[11px] mr-[27px]"><svg class="h-[18px] w-4" viewBox="0 0 16 18" fill="none" stroke="currentColor" stroke-width="1.500"><path d="M1 14l2-3.500V6.500C3 3.500 5 1 8 1s5 2.500 5 5.500v4l2 3.500zM6 14.500c.3 2.500 3.700 2.500 4 0"/></svg></button>
  </div>
</footer>
</body>
</html>
